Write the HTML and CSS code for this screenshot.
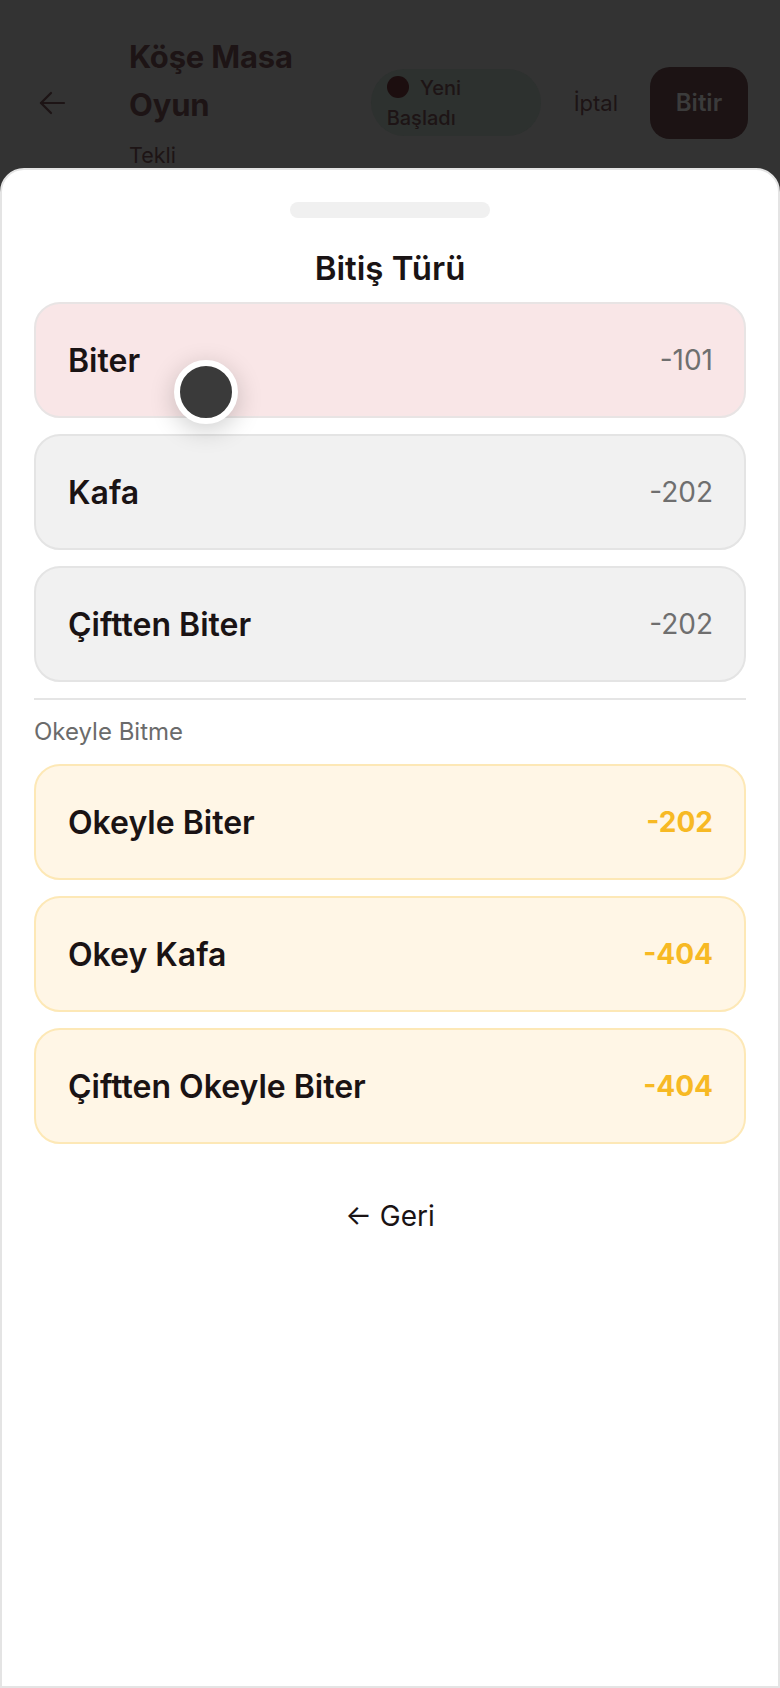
FILE: index.html
```html
<!DOCTYPE html>
<html lang="tr">
<head>
<meta charset="utf-8">
<title>Bitiş Türü</title>
<link rel="stylesheet" href="styles.css">
</head>
<body>
<header class="topbar">
  <button class="back" aria-label="Geri">
    <svg width="28" height="28" viewBox="0 0 28 28" fill="none" stroke="currentColor" stroke-width="2.2" stroke-linecap="round" stroke-linejoin="round"><path d="M26 14H3"/><path d="M13 4L3 14l10 10"/></svg>
  </button>
  <div class="title-block">
    <h1 class="game-title">Köşe Masa Oyun</h1>
    <div class="game-sub">Tekli</div>
  </div>
  <div class="status"><span class="dot"></span> Yeni Başladı</div>
  <span class="cancel">İptal</span>
  <button class="finish">Bitir</button>
</header>

<section class="sheet">
  <div class="handle"></div>
  <h2 class="sheet-title">Bitiş Türü</h2>
  <div class="options">
    <div class="option option-active"><span class="opt-name">Biter</span><span class="opt-val">-101</span></div>
    <div class="option"><span class="opt-name">Kafa</span><span class="opt-val">-202</span></div>
    <div class="option"><span class="opt-name">Çiftten Biter</span><span class="opt-val">-202</span></div>
    <hr class="divider">
    <div class="group-label">Okeyle Bitme</div>
    <div class="option option-okey"><span class="opt-name">Okeyle Biter</span><span class="opt-val">-202</span></div>
    <div class="option option-okey"><span class="opt-name">Okey Kafa</span><span class="opt-val">-404</span></div>
    <div class="option option-okey"><span class="opt-name">Çiftten Okeyle Biter</span><span class="opt-val">-404</span></div>
  </div>
  <div class="back-row"><button class="back-link">← Geri</button></div>
  <div class="touch"></div>
</section>
</body>
</html>
```
FILE: styles.css
```css
* { box-sizing: border-box; }
html, body { margin: 0; padding: 0; }
body {
  width: 780px;
  height: 1688px;
  overflow: hidden;
  background: #333333;
  font-family: Inter, "Noto Sans", sans-serif;
  position: relative;
}
button { font-family: inherit; border: 0; background: none; padding: 0; cursor: pointer; }

.topbar {
  display: flex;
  align-items: center;
  padding: 33px 32px 0 38px;
  color: #1d1415;
}
.back { color: #1d1415; display: flex; width: 28px; height: 28px; }
.title-block {
  flex: 1;
  min-width: 0;
  margin-left: 63px;
  margin-right: 20px;
}
.game-title {
  margin: 0;
  font-size: 31px;
  font-weight: 700;
  line-height: 48px;
  letter-spacing: -0.2px;
  color: #1d1415;
}
.game-sub {
  margin-top: 10px;
  font-size: 21.5px;
  line-height: 33px;
  color: #1d1415;
}
.status {
  width: 170px;
  flex: none;
  background: #2d312f;
  border-radius: 34px;
  padding: 4px 16px 3px;
  font-size: 20px;
  font-weight: 500;
  line-height: 30px;
  color: #1d1415;
}
.dot {
  display: inline-block;
  width: 22px;
  height: 22px;
  border-radius: 50%;
  background: #1c0e0f;
  vertical-align: -3px;
  margin-right: 6px;
}
.cancel {
  margin-left: 33px;
  font-size: 22px;
  color: #1d1415;
}
.finish {
  margin-left: 32px;
  width: 98px;
  height: 72px;
  border-radius: 20px;
  background: #1c1314;
  color: #3b3b3b;
  font-size: 24px;
  font-weight: 600;
}

.sheet {
  position: absolute;
  top: 168px;
  left: 0;
  right: 0;
  bottom: 0;
  background: #ffffff;
  border: 2px solid #e4e4e4;
  border-radius: 24px 24px 0 0;
  padding: 32px 32px 0;
}
.handle {
  width: 200px;
  height: 16px;
  border-radius: 8px;
  background: #f0f0f0;
  margin: 0 auto;
}
.sheet-title {
  margin: 30px 0 14px;
  text-align: center;
  font-size: 33px;
  font-weight: 600;
  line-height: 40px;
  color: #1a1314;
}
.options {
  display: flex;
  flex-direction: column;
  gap: 16px;
}
.option {
  height: 116px;
  display: flex;
  align-items: center;
  justify-content: space-between;
  padding: 0 31px 0 32px;
  border-radius: 26px;
  background: #f1f1f1;
  border: 2px solid #e4e4e4;
}
.option-active {
  background: #f9e6e7;
  border-color: #e8e4e4;
}
.option-okey {
  background: #fff6e6;
  border-color: #fde8b6;
}
.opt-name {
  font-size: 32px;
  font-weight: 600;
  color: #1a1314;
}
.opt-val {
  font-size: 28px;
  color: #6f6f6f;
}
.option-okey .opt-val {
  font-size: 28px;
  font-weight: 700;
  color: #f7b924;
}
.divider {
  margin: 0;
  border: 0;
  height: 2px;
  background: #e5e5e5;
}
.group-label {
  font-size: 24px;
  line-height: 32px;
  color: #6b6b6b;
}
.back-row {
  display: flex;
  justify-content: center;
  margin-top: 52px;
}
.back-link {
  font-size: 28px;
  line-height: 40px;
  color: #1a1314;
}
.touch {
  position: absolute;
  left: 172px;
  top: 190px;
  width: 64px;
  height: 64px;
  border-radius: 50%;
  background: #3a3a3a;
  border: 6px solid #ffffff;
  box-shadow: 0 6px 26px rgba(0, 0, 0, 0.2);
}
```
